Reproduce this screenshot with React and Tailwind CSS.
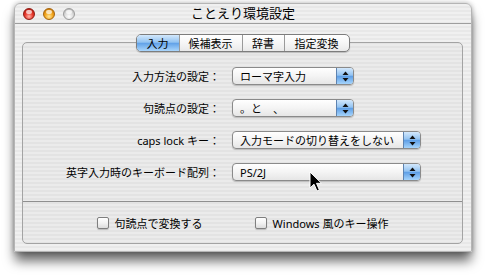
import React from 'react';

const font = { fontFamily: '"Noto Sans", "Noto Sans CJK JP", sans-serif' };

function Light({ color }) {
  const fills = {
    red: 'bg-[radial-gradient(circle_at_50%_75%,#ffb3a8_0%,#e8382c_45%,#a5140c_100%)] border-[#8e1a12]',
    amber: 'bg-[radial-gradient(circle_at_50%_75%,#ffe69a_0%,#f3a51a_45%,#b86a06_100%)] border-[#a4630c]',
    gray: 'bg-[radial-gradient(circle_at_50%_75%,#ffffff_0%,#d8d8d8_50%,#a9a9a9_100%)] border-[#9a9a9a]',
  };
  return (
    <div className={`relative w-[12px] h-[12px] rounded-full border ${fills[color]}`}>
      <div className="absolute left-[2px] top-[1px] w-[6px] h-[4px] rounded-full bg-white/70" />
    </div>
  );
}

function Popup({ text, wide }) {
  return (
    <div
      className={`flex h-[18px] ${wide ? 'w-[189px]' : 'w-[122px]'} rounded-[4px] border border-[#8a8a8a] bg-[linear-gradient(180deg,#ffffff_0%,#f4f4f4_50%,#e6e6e6_100%)] shadow-[0_1px_1px_rgba(0,0,0,0.2)] overflow-hidden`}
    >
      <div className="flex-1 flex items-center pl-[7px] text-[11px] leading-none text-black whitespace-pre">{text}</div>
      <div className="w-[17px] flex items-center justify-center border-l border-[#5e83b0] bg-[linear-gradient(180deg,#d3e8fc_0%,#93c3f1_45%,#5f9fe6_52%,#a5d4fc_100%)]">
        <svg width="7" height="11" viewBox="0 0 7 11">
          <path d="M3.5 0.5 L6.5 4 L0.5 4 Z" fill="#111" />
          <path d="M3.5 10.5 L6.5 7 L0.5 7 Z" fill="#111" />
        </svg>
      </div>
    </div>
  );
}

function Row({ label, value, wide }) {
  return (
    <div className="flex items-center h-[18px]">
      <div className="w-[197px] text-right text-[11px] leading-none text-black">{label}</div>
      <div className="ml-[12px]">
        <Popup text={value} wide={wide} />
      </div>
    </div>
  );
}

function Check({ label }) {
  return (
    <div className="flex items-center gap-[6px]">
      <div className="w-[12px] h-[12px] rounded-[2px] border border-[#7f7f7f] bg-[linear-gradient(180deg,#ffffff_0%,#f2f2f2_50%,#dcdcdc_100%)] shadow-[0_1px_1px_rgba(0,0,0,0.2)]" />
      <span className="text-[11px] leading-none text-black">{label}</span>
    </div>
  );
}

export default function App() {
  const tabs = [
    { name: '入力', w: 'w-[42px]', on: true },
    { name: '候補表示', w: 'w-[63px]' },
    { name: '辞書', w: 'w-[42px]' },
    { name: '指定変換', w: 'w-[65px]' },
  ];

  return (
    <div className="relative w-[487px] h-[275px] bg-white overflow-hidden" style={font}>
      {/* Window */}
      <div className="ml-[14px] mt-[3px] w-[458px] h-[249px] rounded-t-[6px] overflow-hidden bg-[repeating-linear-gradient(180deg,#f0f0f0_0px,#f0f0f0_2px,#e8e8e8_2px,#e8e8e8_4px)] shadow-[0_10px_12px_-1px_rgba(0,0,0,0.6),0_0_5px_rgba(0,0,0,0.3)] border border-[#b5b5b5]">
        {/* Title bar */}
        <div className="relative flex items-center h-[20px] border-b border-[#9e9e9e]">
          <div className="flex items-center gap-[8px] pl-[8px]">
            <Light color="red" />
            <Light color="amber" />
            <Light color="gray" />
          </div>
          <div className="absolute inset-0 flex items-center justify-center text-[13px] leading-none text-black">ことえり環境設定</div>
        </div>

        {/* Group box */}
        <div className="ml-[7px] mr-[8px] mt-[18px] h-[202px] rounded-[5px] border border-[#a3a3a3] bg-black/[0.02]">
          <div className="flex justify-center -mt-[9px]">
            <div className="flex h-[18px] rounded-[5px] border border-[#7d7d7d] overflow-hidden bg-[linear-gradient(180deg,#ffffff_0%,#f6f6f6_50%,#e9e9e9_100%)] shadow-[0_1px_1px_rgba(0,0,0,0.2)]">
              {tabs.map((t, i) => (
                <div
                  key={t.name}
                  className={`${t.w} flex items-center justify-center text-[11px] leading-none text-black ${i > 0 ? 'border-l border-[#9a9a9a]' : ''} ${t.on ? 'bg-[linear-gradient(180deg,#d3e8fc_0%,#93c3f1_45%,#62a2e8_52%,#aad6fc_100%)]' : ''}`}
                >
                  {t.name}
                </div>
              ))}
            </div>
          </div>

          <div className="flex flex-col gap-[14px] mt-[15px]">
            <Row label="入力方法の設定：" value="ローマ字入力" />
            <Row label="句読点の設定：" value="。と　、" />
            <Row label="caps lock キー：" value="入力モードの切り替えをしない" wide />
            <Row label="英字入力時のキーボード配列：" value="PS/2J" wide />
          </div>

          <div className="mt-[20px] border-t border-[#8f8f8f]" />

          <div className="flex justify-center gap-[52px] mt-[15px]">
            <Check label="句読点で変換する" />
            <Check label="Windows 風のキー操作" />
          </div>
        </div>
      </div>

      {/* Mouse cursor */}
      <svg className="absolute left-[309px] top-[171px]" width="14" height="22" viewBox="0 0 14 22">
        <path d="M1 1 L1 17 L5 13.2 L8 20 L10.4 19 L7.5 12.3 L12.5 12.3 Z" fill="#000" stroke="#fff" strokeWidth="1" strokeLinejoin="round" />
      </svg>
    </div>
  );
}
